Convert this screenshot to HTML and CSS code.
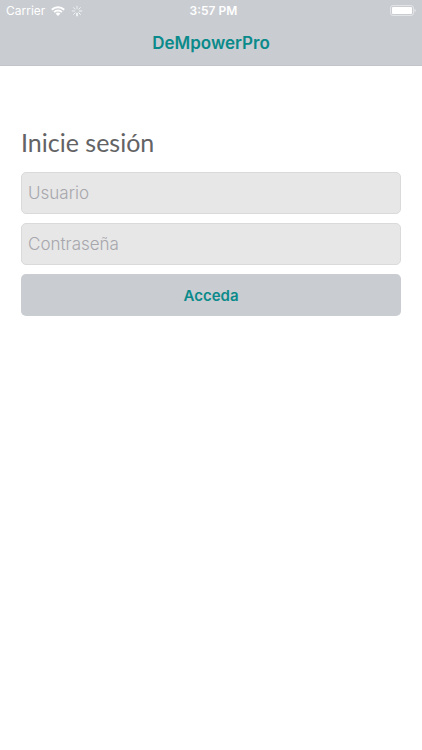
FILE: index.html
```html
<!DOCTYPE html>
<html lang="es">
<head>
<meta charset="utf-8">
<meta name="viewport" content="width=device-width, initial-scale=1">
<title>DeMpowerPro</title>
<link rel="stylesheet" href="styles.css">
</head>
<body>
<header class="top">
  <div class="status">
    <div class="status-left">
      <span>Carrier</span>
      <svg class="wifi" viewBox="0 0 14 10" aria-hidden="true">
        <path d="M7 10 4.6 7.6a3.4 3.4 0 0 1 4.8 0z" fill="#fff"/>
        <path d="M3.1 6.1a5.6 5.6 0 0 1 7.8 0M.8 3.7a8.9 8.9 0 0 1 12.4 0" fill="none" stroke="#fff" stroke-width="2"/>
      </svg>
      <svg class="spinner" viewBox="0 0 12 12" stroke="#fff" stroke-linecap="round" aria-hidden="true">
        <path d="M6 1.2v2.4" opacity=".7"/><path d="M9.4 2.6 7.8 4.2" opacity=".7"/><path d="M10.8 6H8.4" opacity=".8"/><path d="M9.4 9.4 7.8 7.8" opacity=".9"/><path d="M6 10.8V8.4" stroke-width="1.4"/><path d="M2.6 9.4l1.6-1.6" opacity=".7"/><path d="M1.2 6h2.4" opacity=".7"/><path d="M2.6 2.6l1.6 1.6" opacity=".7"/>
      </svg>
    </div>
    <time class="clock">3:57 PM</time>
    <svg class="battery" viewBox="0 0 26 12" aria-hidden="true">
      <rect x=".5" y=".5" width="23" height="10" rx="2.5" fill="none" stroke="#fff" stroke-opacity=".45"/>
      <rect x="2" y="2" width="20" height="7" rx="1" fill="#fff"/>
      <path d="M24.5 3.8q1.3.6 1.3 1.7t-1.3 1.7z" fill="#fff" opacity=".5"/>
    </svg>
  </div>
  <div class="brand">DeMpowerPro</div>
</header>
<main class="content">
  <h1 class="title">Inicie sesión</h1>
  <form class="form">
    <input class="field" type="text" placeholder="Usuario" aria-label="Usuario">
    <input class="field" type="password" placeholder="Contraseña" aria-label="Contraseña">
    <button class="submit" type="button">Acceda</button>
  </form>
</main>
</body>
</html>
```
FILE: styles.css
```css
* {
  box-sizing: border-box;
}

body {
  margin: 0;
  background: #fff;
  font-family: Inter, "Liberation Sans", sans-serif;
}

.top {
  background: #c9ccd1;
  border-bottom: 1px solid #c2c4c8;
}

.status {
  display: grid;
  grid-template-columns: 1fr auto 1fr;
  align-items: center;
  height: 21px;
  padding: 0 6px;
  color: #fff;
  font-size: 12px;
}

.status-left {
  display: flex;
  align-items: center;
  gap: 6px;
}

.wifi {
  width: 14px;
  height: 10px;
}

.spinner {
  width: 12px;
  height: 12px;
}

.clock {
  padding-left: 5px;
  font-weight: 600;
}

.battery {
  justify-self: end;
  width: 26px;
  height: 12px;
}

.brand {
  height: 44px;
  color: #0a8a8a;
  font-size: 17px;
  font-weight: 600;
  line-height: 44px;
  text-align: center;
}

.content {
  padding: 61px 21px 0;
}

.title {
  margin: 0 0 15px;
  color: #636365;
  font-family: Lato, sans-serif;
  font-size: 25px;
  font-weight: 400;
  line-height: 30px;
}

.form {
  display: grid;
  gap: 9px;
}

.field {
  width: 100%;
  height: 42px;
  padding: 0 6px;
  border: 1px solid #dadada;
  border-radius: 5px;
  background: #e7e7e7;
  color: #333;
  font: 300 17px Inter, sans-serif;
}

.field::placeholder {
  color: #a6a6ac;
}

.submit {
  height: 42px;
  border: 0;
  border-radius: 5px;
  background: #c9ccd1;
  color: #0a8a8a;
  font: 600 15px Inter, sans-serif;
}
```
